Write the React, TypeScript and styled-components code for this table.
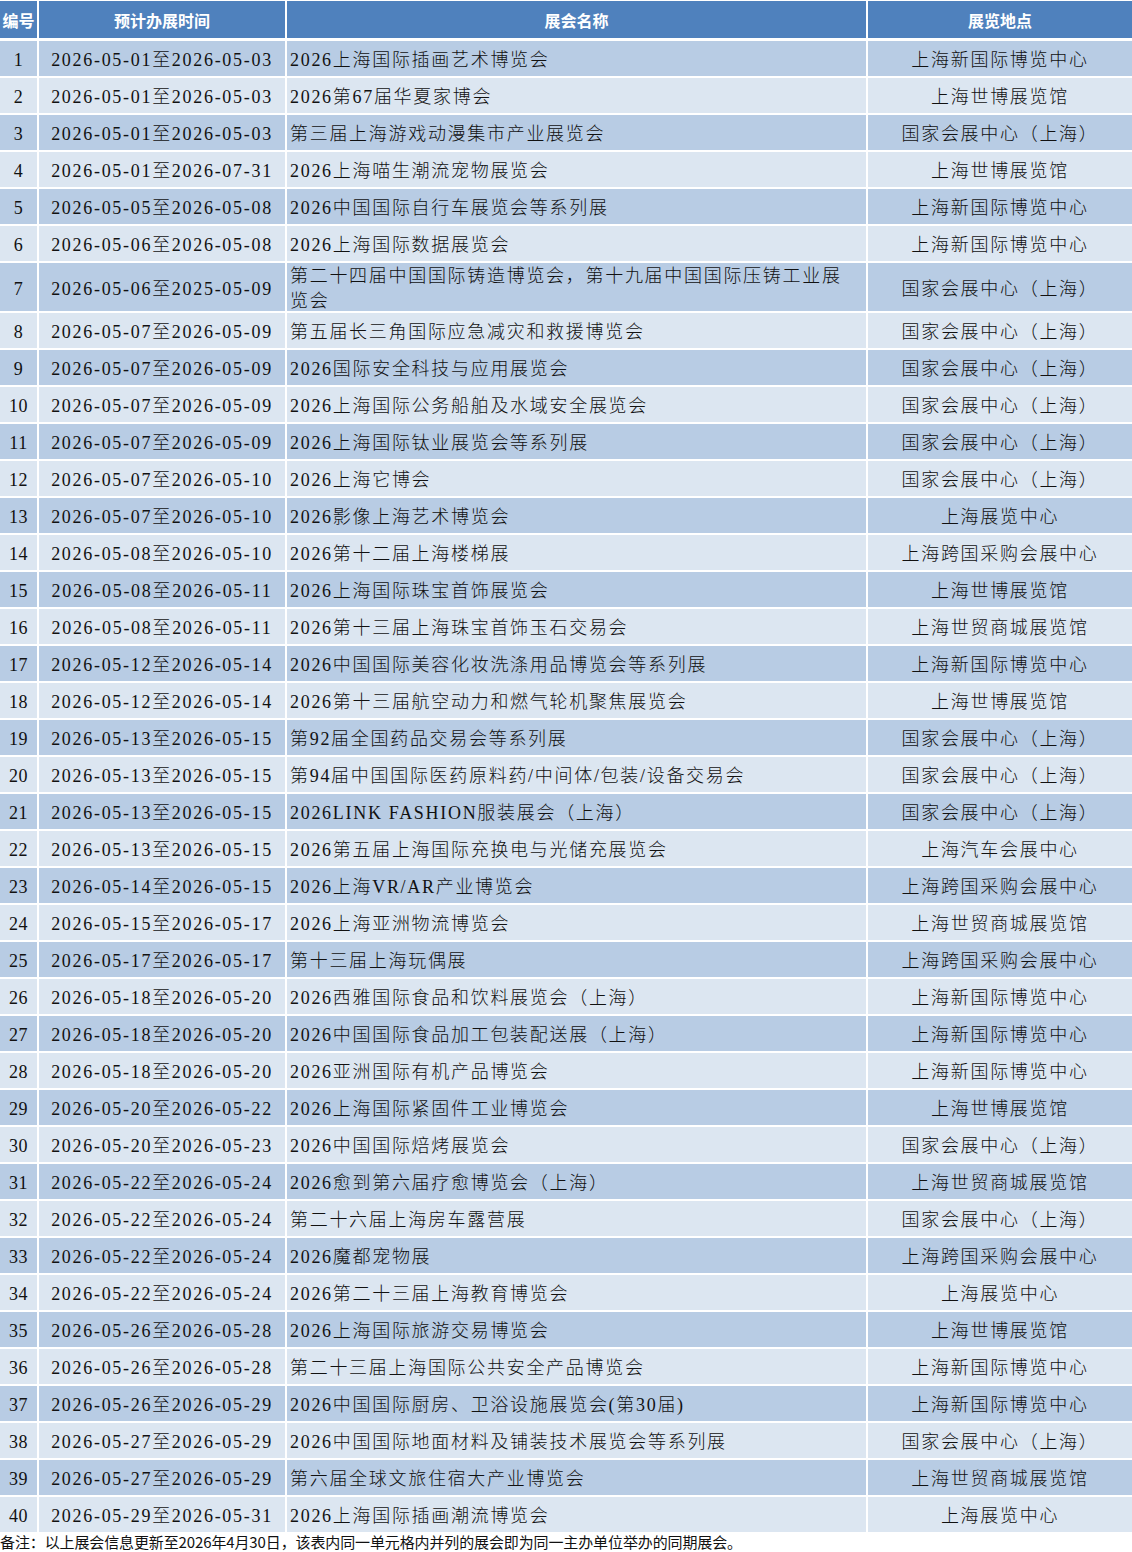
import React from "react";
import styled, { createGlobalStyle } from "styled-components";

const GlobalStyle = createGlobalStyle`
  html, body { margin: 0; padding: 0; background: #ffffff; }
  body { font-family: "Liberation Serif", "Noto Sans CJK SC", serif; }
`;

const COLS = "37px 246px 579px 1fr";

const Sheet = styled.div`
  width: 1132px;
  display: flex;
  flex-direction: column;
  padding-top: 1px;
  background: #ffffff;
`;

const HeaderRow = styled.div`
  display: grid;
  grid-template-columns: ${COLS};
  column-gap: 2px;
  height: 37px;
  margin-bottom: 3px;
`;

const HeaderCell = styled.div`
  background: #4f81bd;
  color: #ffffff;
  font-family: "Noto Sans CJK SC", "Noto Sans", sans-serif;
  font-weight: 700;
  font-size: 16px;
  display: flex;
  align-items: center;
  justify-content: center;
  white-space: nowrap;
  overflow: hidden;
`;

const Body = styled.div`
  display: flex;
  flex-direction: column;
  gap: 2px;
`;

const Row = styled.div<{ $tall?: boolean }>`
  display: grid;
  grid-template-columns: ${COLS};
  column-gap: 2px;
  height: ${(p) => (p.$tall ? 48 : 35)}px;
`;

const Cell = styled.div<{ $odd: boolean; $align: "center" | "left" }>`
  background: ${(p) => (p.$odd ? "#b8cce4" : "#dce6f1")};
  color: #111111;
  font-family: "Liberation Serif", "Noto Sans CJK SC", serif;
  font-weight: 300;
  font-size: 18px;
  letter-spacing: 1.7px;
  line-height: 25px;
  display: flex;
  align-items: center;
  justify-content: ${(p) => (p.$align === "center" ? "center" : "flex-start")};
  text-align: ${(p) => p.$align};
  padding: 4px 0 0 ${(p) => (p.$align === "left" ? 3 : 0)}px;
  box-sizing: border-box;
  white-space: pre-line;
  overflow: hidden;
`;

const NumCell = styled(Cell)`
  letter-spacing: 0.5px;
`;

const Note = styled.div`
  font-family: "Noto Sans CJK SC", "Noto Sans", sans-serif;
  font-size: 15px;
  letter-spacing: -0.12px;
  line-height: 18px;
  color: #111111;
  white-space: nowrap;
  padding-top: 1px;
`;

type Item = [string, string, string];

const data: Item[] = [
  ["2026-05-01至2026-05-03", "2026上海国际插画艺术博览会", "上海新国际博览中心"],
  ["2026-05-01至2026-05-03", "2026第67届华夏家博会", "上海世博展览馆"],
  ["2026-05-01至2026-05-03", "第三届上海游戏动漫集市产业展览会", "国家会展中心（上海）"],
  ["2026-05-01至2026-07-31", "2026上海喵生潮流宠物展览会", "上海世博展览馆"],
  ["2026-05-05至2026-05-08", "2026中国国际自行车展览会等系列展", "上海新国际博览中心"],
  ["2026-05-06至2026-05-08", "2026上海国际数据展览会", "上海新国际博览中心"],
  ["2026-05-06至2025-05-09", "第二十四届中国国际铸造博览会，第十九届中国国际压铸工业展\n览会", "国家会展中心（上海）"],
  ["2026-05-07至2026-05-09", "第五届长三角国际应急减灾和救援博览会", "国家会展中心（上海）"],
  ["2026-05-07至2026-05-09", "2026国际安全科技与应用展览会", "国家会展中心（上海）"],
  ["2026-05-07至2026-05-09", "2026上海国际公务船舶及水域安全展览会", "国家会展中心（上海）"],
  ["2026-05-07至2026-05-09", "2026上海国际钛业展览会等系列展", "国家会展中心（上海）"],
  ["2026-05-07至2026-05-10", "2026上海它博会", "国家会展中心（上海）"],
  ["2026-05-07至2026-05-10", "2026影像上海艺术博览会", "上海展览中心"],
  ["2026-05-08至2026-05-10", "2026第十二届上海楼梯展", "上海跨国采购会展中心"],
  ["2026-05-08至2026-05-11", "2026上海国际珠宝首饰展览会", "上海世博展览馆"],
  ["2026-05-08至2026-05-11", "2026第十三届上海珠宝首饰玉石交易会", "上海世贸商城展览馆"],
  ["2026-05-12至2026-05-14", "2026中国国际美容化妆洗涤用品博览会等系列展", "上海新国际博览中心"],
  ["2026-05-12至2026-05-14", "2026第十三届航空动力和燃气轮机聚焦展览会", "上海世博展览馆"],
  ["2026-05-13至2026-05-15", "第92届全国药品交易会等系列展", "国家会展中心（上海）"],
  ["2026-05-13至2026-05-15", "第94届中国国际医药原料药/中间体/包装/设备交易会", "国家会展中心（上海）"],
  ["2026-05-13至2026-05-15", "2026LINK FASHION服装展会（上海）", "国家会展中心（上海）"],
  ["2026-05-13至2026-05-15", "2026第五届上海国际充换电与光储充展览会", "上海汽车会展中心"],
  ["2026-05-14至2026-05-15", "2026上海VR/AR产业博览会", "上海跨国采购会展中心"],
  ["2026-05-15至2026-05-17", "2026上海亚洲物流博览会", "上海世贸商城展览馆"],
  ["2026-05-17至2026-05-17", "第十三届上海玩偶展", "上海跨国采购会展中心"],
  ["2026-05-18至2026-05-20", "2026西雅国际食品和饮料展览会（上海）", "上海新国际博览中心"],
  ["2026-05-18至2026-05-20", "2026中国国际食品加工包装配送展（上海）", "上海新国际博览中心"],
  ["2026-05-18至2026-05-20", "2026亚洲国际有机产品博览会", "上海新国际博览中心"],
  ["2026-05-20至2026-05-22", "2026上海国际紧固件工业博览会", "上海世博展览馆"],
  ["2026-05-20至2026-05-23", "2026中国国际焙烤展览会", "国家会展中心（上海）"],
  ["2026-05-22至2026-05-24", "2026愈到第六届疗愈博览会（上海）", "上海世贸商城展览馆"],
  ["2026-05-22至2026-05-24", "第二十六届上海房车露营展", "国家会展中心（上海）"],
  ["2026-05-22至2026-05-24", "2026魔都宠物展", "上海跨国采购会展中心"],
  ["2026-05-22至2026-05-24", "2026第二十三届上海教育博览会", "上海展览中心"],
  ["2026-05-26至2026-05-28", "2026上海国际旅游交易博览会", "上海世博展览馆"],
  ["2026-05-26至2026-05-28", "第二十三届上海国际公共安全产品博览会", "上海新国际博览中心"],
  ["2026-05-26至2026-05-29", "2026中国国际厨房、卫浴设施展览会(第30届)", "上海新国际博览中心"],
  ["2026-05-27至2026-05-29", "2026中国国际地面材料及铺装技术展览会等系列展", "国家会展中心（上海）"],
  ["2026-05-27至2026-05-29", "第六届全球文旅住宿大产业博览会", "上海世贸商城展览馆"],
  ["2026-05-29至2026-05-31", "2026上海国际插画潮流博览会", "上海展览中心"],
];

export default function App() {
  return (
    <>
      <GlobalStyle />
      <Sheet>
        <HeaderRow>
          <HeaderCell>编号</HeaderCell>
          <HeaderCell>预计办展时间</HeaderCell>
          <HeaderCell>展会名称</HeaderCell>
          <HeaderCell>展览地点</HeaderCell>
        </HeaderRow>
        <Body>
          {data.map(([date, name, place], i) => {
            const odd = i % 2 === 0;
            return (
              <Row key={i} $tall={name.includes("\n")}>
                <NumCell $odd={odd} $align="center">{i + 1}</NumCell>
                <Cell $odd={odd} $align="center">{date}</Cell>
                <Cell $odd={odd} $align="left">{name}</Cell>
                <Cell $odd={odd} $align="center">{place}</Cell>
              </Row>
            );
          })}
        </Body>
        <Note>备注：以上展会信息更新至2026年4月30日，该表内同一单元格内并列的展会即为同一主办单位举办的同期展会。</Note>
      </Sheet>
    </>
  );
}
